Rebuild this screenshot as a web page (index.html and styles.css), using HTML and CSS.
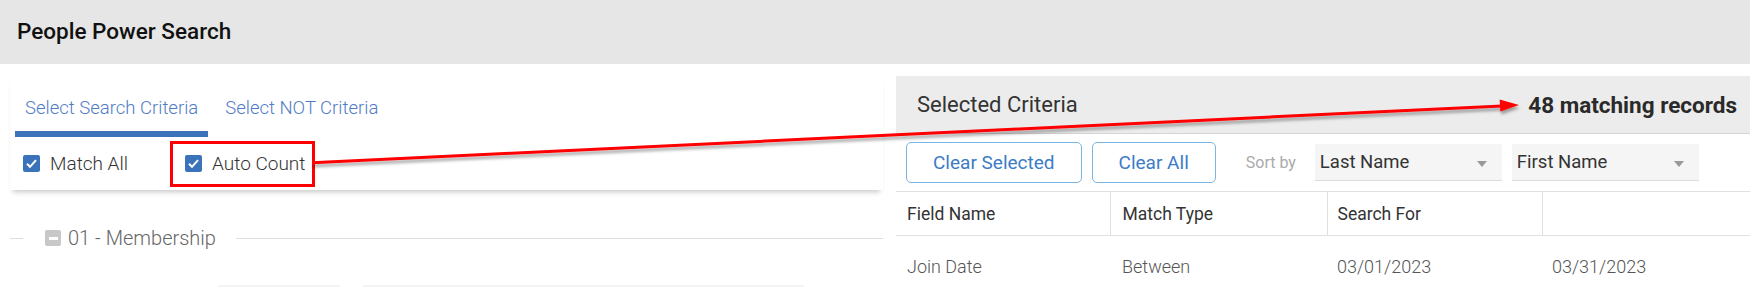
FILE: index.html
```html
<!DOCTYPE html>
<html lang="en">
<head>
<meta charset="utf-8">
<title>People Power Search</title>
<link rel="stylesheet" href="styles.css">
</head>
<body>
<header class="topbar"><h1 class="title">People Power Search</h1></header>
<main class="layout">
  <section class="left">
    <div class="card">
      <nav class="tabs">
        <a class="tab active">Select Search Criteria</a>
        <a class="tab">Select NOT Criteria</a>
      </nav>
      <div class="options">
        <label class="check">
          <span class="box"><svg viewBox="0 0 17 17" width="17" height="17"><path d="M4 8.8l3 3 6-6.6" fill="none" stroke="#fff" stroke-width="2"/></svg></span>
          <span>Match All</span>
        </label>
        <label class="check highlight">
          <span class="box"><svg viewBox="0 0 17 17" width="17" height="17"><path d="M4 8.8l3 3 6-6.6" fill="none" stroke="#fff" stroke-width="2"/></svg></span>
          <span>Auto Count</span>
        </label>
      </div>
    </div>
    <div class="group">
      <span class="rule short"></span>
      <span class="collapse-icon"><span class="minus"></span></span>
      <span class="group-title">01 - Membership</span>
      <span class="rule long"></span>
    </div>
    <div class="inputs"><span class="inp inp-a"></span><span class="inp inp-b"></span></div>
  </section>
  <section class="right">
    <div class="crit-head">
      <span class="crit-title">Selected Criteria</span>
      <span class="count">48 matching records</span>
    </div>
    <div class="toolbar">
      <button class="btn">Clear Selected</button>
      <button class="btn">Clear All</button>
      <span class="sort-label">Sort by</span>
      <div class="select">Last Name<span class="caret"></span></div>
      <div class="select">First Name<span class="caret"></span></div>
    </div>
    <table class="crit-table">
      <thead>
        <tr>
          <th class="c1">Field Name</th>
          <th class="c2">Match Type</th>
          <th class="c3">Search For</th>
          <th class="c4"></th>
        </tr>
      </thead>
      <tbody>
        <tr>
          <td class="c1">Join Date</td>
          <td class="c2">Between</td>
          <td class="c3">03/01/2023</td>
          <td class="c4">03/31/2023</td>
        </tr>
      </tbody>
    </table>
  </section>
</main>
<svg class="annot" width="1750" height="287" viewBox="0 0 1750 287">
  <defs>
    <filter id="sh" x="-5%" y="-50%" width="110%" height="200%">
      <feDropShadow dx="1" dy="3" stdDeviation="1.5" flood-color="#000" flood-opacity="0.35"/>
    </filter>
  </defs>
  <g filter="url(#sh)">
    <line x1="312" y1="162.8" x2="1502" y2="105.9" stroke="#ff0000" stroke-width="3"/>
    <polygon points="1519,105 1500.3,111.4 1499.7,99.6" fill="#ff0000"/>
  </g>
</svg>
</body>
</html>
```
FILE: styles.css
```css
* { box-sizing: border-box; }
html, body { margin: 0; padding: 0; }
body {
  font-family: Roboto, "Liberation Sans", Arial, sans-serif;
  background: #fff;
  color: #333;
  width: 1750px;
  height: 287px;
  overflow: hidden;
  position: relative;
}
.topbar {
  height: 64px;
  background: #e6e6e6;
  display: flex;
  align-items: center;
  padding: 0 0 2px 17px;
}
.title {
  margin: 0;
  font-size: 22.5px;
  font-weight: 500;
  color: #111;
  line-height: 26px;
}
.layout {
  display: flex;
  gap: 13px;
  padding: 12px 0 0 10px;
}
.left { width: 873px; flex: none; }
.right { flex: 1; }

.card {
  background: #fff;
  box-shadow: 0 5px 5px -3px rgba(0,0,0,0.22);
}
.tabs { display: flex; gap: 7px; padding-left: 5px; }
.tab {
  display: block;
  padding: 21px 10px 12px;
  line-height: 22px;
  font-size: 18.5px;
  font-weight: 300;
  color: #4f7cc6;
  border-bottom: 6px solid transparent;
}
.tab.active { border-bottom-color: #3a73ba; }

.options {
  height: 53px;
  display: flex;
  align-items: center;
  gap: 42px;
  padding-left: 13px;
}
.check {
  display: flex;
  align-items: center;
  gap: 10px;
  font-size: 19px;
  font-weight: 300;
  color: #333;
}
.box {
  width: 17px;
  height: 17px;
  border-radius: 2px;
  background: #3a73ba;
  display: block;
}
.box svg { display: block; }
.highlight {
  height: 46px;
  border: 3px solid #ff0000;
  padding: 0 7px 0 12px;
}

.group {
  margin-top: 38px;
  height: 20px;
  display: flex;
  align-items: center;
}
.rule { height: 1px; background: #dedede; }
.rule.short { width: 13px; margin-right: 22px; }
.rule.long { flex: 1; margin-left: 20px; }
.collapse-icon {
  width: 16px;
  height: 16px;
  border-radius: 2px;
  background: #c8c8c8;
  display: flex;
  align-items: center;
  justify-content: center;
  margin-right: 7px;
}
.minus { width: 9px; height: 3px; background: #fff; }
.group-title {
  font-size: 20px;
  font-weight: 300;
  color: #666;
  line-height: 20px;
}
.inputs {
  margin-top: 37px;
  display: flex;
  gap: 23px;
  padding-left: 208px;
}
.inp { height: 20px; background: #f4f4f4; }
.inp-a { width: 122px; }
.inp-b { width: 441px; }

.crit-head {
  height: 58px;
  background: #ececec;
  border-bottom: 1px solid #d4d4d4;
  display: flex;
  align-items: center;
  justify-content: space-between;
  padding: 0 13px 0 21px;
}
.crit-title { font-size: 22px; font-weight: 400; color: #333; }
.count { font-size: 22.5px; font-weight: 700; color: #2a2a2a; }

.toolbar {
  height: 57px;
  display: flex;
  align-items: center;
  padding-left: 10px;
}
.btn {
  height: 41px;
  padding: 0 26px;
  border: 1px solid #7ab5e3;
  border-radius: 5px;
  background: #fff;
  font-family: inherit;
  font-size: 19px;
  font-weight: 400;
  color: #3c7cc6;
  margin-right: 10px;
}
.sort-label {
  margin: 0 19px 0 20px;
  font-size: 16px;
  color: #aaa;
}
.select {
  position: relative;
  width: 187px;
  height: 37px;
  margin-right: 10px;
  background: #f5f5f5;
  border-bottom: 1px solid #dcdcdc;
  padding-left: 5px;
  font-size: 18.5px;
  color: #333;
  display: flex;
  align-items: center;
}
.caret {
  position: absolute;
  right: 15px;
  top: 17px;
  width: 0;
  height: 0;
  border-left: 5.5px solid transparent;
  border-right: 5.5px solid transparent;
  border-top: 6px solid #999;
}

.crit-table {
  width: 100%;
  border-collapse: collapse;
  table-layout: fixed;
}
.crit-table th, .crit-table td {
  text-align: left;
  padding: 0 0 0 11px;
  white-space: nowrap;
}
.crit-table th {
  height: 44px;
  font-size: 17.5px;
  font-weight: 400;
  color: #333;
  border-top: 1px solid #e0e0e0;
  border-bottom: 1px solid #e0e0e0;
}
.crit-table th + th { border-left: 1px solid #e0e0e0; }
.crit-table td {
  height: 62px;
  font-size: 18px;
  font-weight: 300;
  color: #555;
}
.c1 { width: 214px; }
.c2 { width: 217px; padding-left: 12px !important; }
.c3 { width: 215px; padding-left: 10px !important; }
.c4 { padding-left: 10px !important; }

.annot {
  position: absolute;
  left: 0;
  top: 0;
  pointer-events: none;
}
```
